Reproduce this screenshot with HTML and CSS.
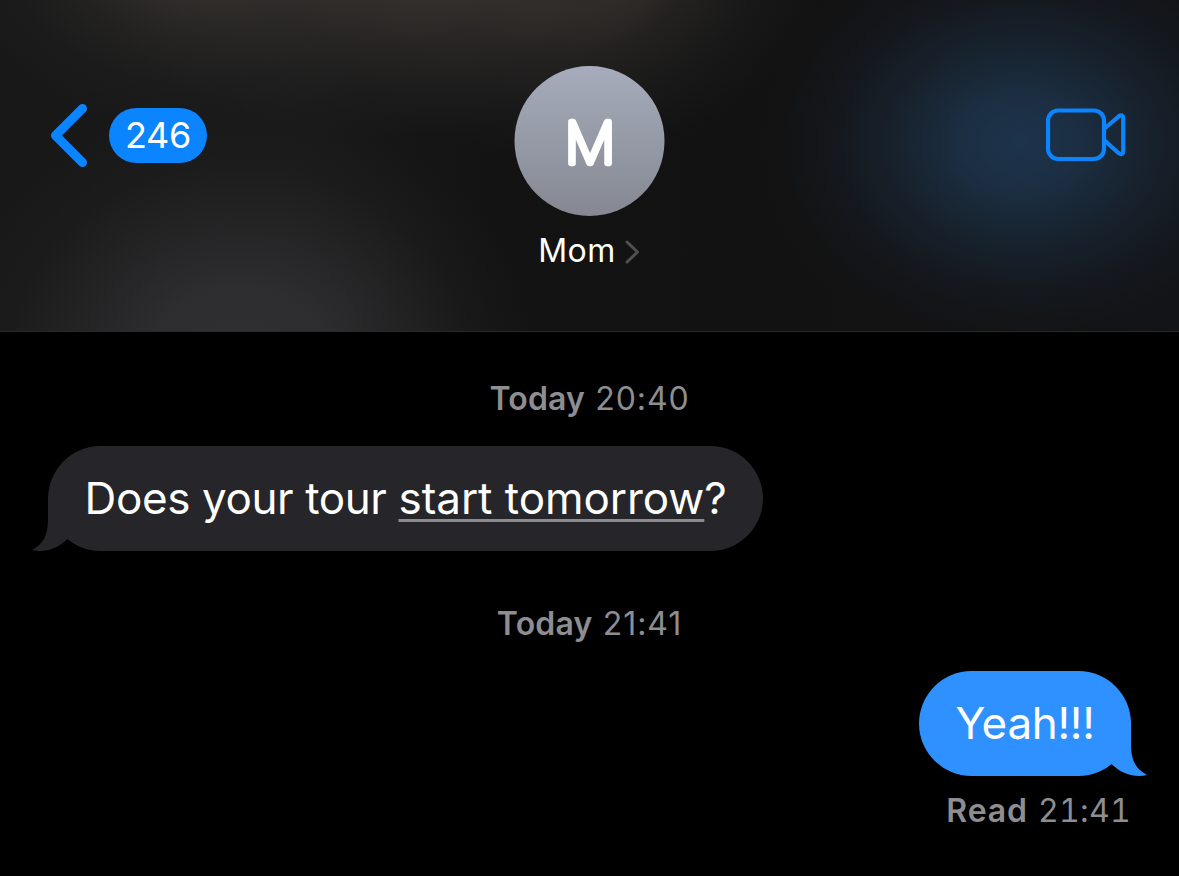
FILE: index.html
```html
<!DOCTYPE html>
<html lang="en">
  <head>
    <meta charset="UTF-8" />
    <title>Mom</title>
    <link rel="stylesheet" href="styles.css">
  </head>
  <body>
    <!-- top bar -->
    <header class="header">
      <a class="back" href="#">
        <svg class="back-icon" width="38" height="64" viewBox="0 0 38 64">
          <path d="M32.5 5.5 L5.5 32.500 L32.5 59.500" />
        </svg>
        <span class="unread">246</span>
      </a>
      <div class="contact">
        <svg class="avatar" width="150" height="150" viewBox="0 0 150 150">
          <defs>
            <linearGradient id="avatarFill" x1="0" y1="0" x2="0" y2="1">
              <stop offset="0" stop-color="#a6acbb" />
              <stop offset="1" stop-color="#858892" />
            </linearGradient>
          </defs>
          <circle cx="74.5" cy="75" r="75" fill="url(#avatarFill)" />
          <text class="initial" x="75" y="97" text-anchor="middle">M</text>
        </svg>
        <div class="name">
          <span class="name-text">Mom</span>
          <svg class="name-icon" width="15" height="24" viewBox="0 0 15 24">
            <path d="M2 2 L12.500 12 L2 22" />
          </svg>
        </div>
      </div>
      <a class="video" href="#">
        <svg width="80" height="54" viewBox="0 0 80 54">
          <rect x="2" y="2.500" width="56" height="48.500" rx="10" />
          <path d="M58 21 L72.500 8.500 Q77.200 5.500 77.200 10.500 V42.500 Q77.200 48 72.500 45 L58 32" />
        </svg>
      </a>
    </header>

    <!-- messages -->
    <main class="chat">
      <div class="date date-first"><b>Today</b> <span class="time">20:40</span></div>
      <div class="bubble received">
        <span class="text">Does your tour <u>start tomorrow</u>?</span>
        <svg class="tail" width="50" height="56" viewBox="0 0 50 56">
          <path d="M16 0 V23 C16 40 11 48 0 54 C12 57 25 53 35 43.500 L50 30 Z" />
        </svg>
      </div>
      <div class="date date-second"><b>Today</b> <span class="time">21:41</span></div>
      <div class="bubble sent">
        <span class="text">Yeah!!!</span>
        <svg class="tail" width="50" height="56" viewBox="0 0 50 56">
          <path d="M16 0 V23 C16 40 11 48 0 54 C12 57 25 53 35 43.500 L50 30 Z" />
        </svg>
      </div>
      <div class="status"><b>Read</b> <span class="time">21:41</span></div>
    </main>
  </body>
</html>
```

FILE: styles.css
```css
* {
  box-sizing: border-box;
}

body {
  margin: 0;
  height: 876px;
  overflow: hidden;
  background-color: #000;
  color: #fff;
  font-family: Inter, "Liberation Sans", sans-serif;
}

/* blurred content behind the top bar */
.header {
  display: grid;
  grid-template-columns: 1fr 150px 1fr;
  align-items: start;
  height: 332px;
  padding: 66px 50px 0;
  border-bottom: 1px solid #29292b;
  background:
    radial-gradient(ellipse 270px 215px at 1020px 143px, #1d334c 0%, rgba(28, 49, 71, 0.9) 22%, rgba(26, 43, 60, 0.65) 45%, rgba(24, 33, 45, 0.35) 70%, rgba(20, 24, 28, 0.12) 88%, rgba(18, 20, 23, 0) 100%),
    radial-gradient(ellipse 300px 260px at 240px 365px, #303032 0%, rgba(47, 47, 49, 0.92) 30%, rgba(42, 42, 44, 0.65) 55%, rgba(34, 34, 35, 0.35) 77%, rgba(26, 26, 27, 0) 100%),
    radial-gradient(ellipse 260px 200px at 200px -70px, rgba(54, 50, 46, 0.7) 35%, rgba(46, 44, 42, 0.5) 55%, rgba(38, 37, 37, 0.25) 78%, rgba(26, 25, 25, 0) 100%),
    radial-gradient(ellipse 300px 210px at 380px -70px, rgba(58, 52, 47, 0.8) 35%, rgba(48, 45, 43, 0.55) 55%, rgba(38, 37, 37, 0.3) 78%, rgba(26, 25, 25, 0) 100%),
    radial-gradient(ellipse 270px 230px at 560px -70px, rgba(60, 53, 47, 0.8) 35%, rgba(48, 45, 43, 0.55) 55%, rgba(38, 37, 37, 0.3) 78%, rgba(26, 25, 25, 0) 100%),
    linear-gradient(90deg, #181818 0%, #191919 25%, #131313 42%, #121212 65%, #121417 100%);
}

.back {
  display: flex;
  align-items: center;
  gap: 21px;
  margin-top: 37px;
  text-decoration: none;
}

.back-icon path {
  fill: none;
  stroke: #0b84ff;
  stroke-width: 9;
  stroke-linecap: round;
  stroke-linejoin: round;
}

.unread {
  width: 98px;
  height: 55px;
  border-radius: 28px;
  background-color: #0b84ff;
  color: #fff;
  font-size: 36px;
  line-height: 55px;
  letter-spacing: -0.3px;
  text-align: center;
}

.contact {
  display: flex;
  flex-direction: column;
  align-items: center;
}

.avatar {
  display: block;
  overflow: visible;
}

.initial {
  fill: #fff;
  stroke: #fff;
  stroke-width: 6.4;
  stroke-linejoin: round;
  font-size: 56px;
  font-weight: 100;
}

.name {
  display: flex;
  align-items: center;
  gap: 9px;
  margin-top: 15px;
  margin-right: 1px;
  font-size: 32px;
  line-height: 40px;
  letter-spacing: 0.5px;
}

.name-icon {
  margin-top: 2px;
}

.name-icon path {
  fill: none;
  stroke: #505053;
  stroke-width: 3;
  stroke-linecap: round;
  stroke-linejoin: round;
}

.video {
  justify-self: end;
  margin-top: 42px;
  margin-right: 3px;
}

.video svg {
  display: block;
  fill: none;
  stroke: #0b84ff;
  stroke-width: 4.2;
  stroke-linejoin: round;
}

.chat {
  display: flex;
  flex-direction: column;
  padding: 0 48px;
}

.date,
.status {
  color: #8d8d92;
  font-size: 32px;
  line-height: 40px;
  white-space: nowrap;
}

.date {
  align-self: center;
  letter-spacing: 0.2px;
}

.date b,
.status b {
  font-weight: 600;
}

.time {
  margin-left: 1px;
  letter-spacing: 0.9px;
}

.date-first {
  margin-top: 47px;
}

.date-second {
  margin-top: 53px;
}

.bubble {
  position: relative;
  height: 105px;
  border-radius: 52.5px;
  font-size: 44px;
  line-height: 105px;
  letter-spacing: -0.3px;
  text-align: center;
  white-space: nowrap;
}

.received {
  align-self: flex-start;
  width: 715px;
  margin-top: 27px;
  background-color: #26252a;
  letter-spacing: -0.4px;
}

.received u {
  letter-spacing: -0.05px;
  text-decoration-color: #8c8c90;
  text-decoration-thickness: 3px;
  text-underline-offset: 5px;
  text-decoration-skip-ink: none;
}

.sent {
  align-self: flex-end;
  width: 212px;
  margin-top: 27px;
  background-color: #2e91ff;
}

/* the tail hangs over the lower corner of the bubble */
.tail {
  position: absolute;
  bottom: -1px;
  left: -16px;
}

.received .tail {
  fill: #26252a;
}

.sent .tail {
  left: auto;
  right: -16px;
  fill: #2e91ff;
  transform: scaleX(-1);
}

.status {
  align-self: flex-end;
  margin-top: 15px;
  letter-spacing: 0.9px;
}

.status .time {
  margin-left: 0;
  font-variant-numeric: tabular-nums;
  letter-spacing: 0.3px;
}
```
